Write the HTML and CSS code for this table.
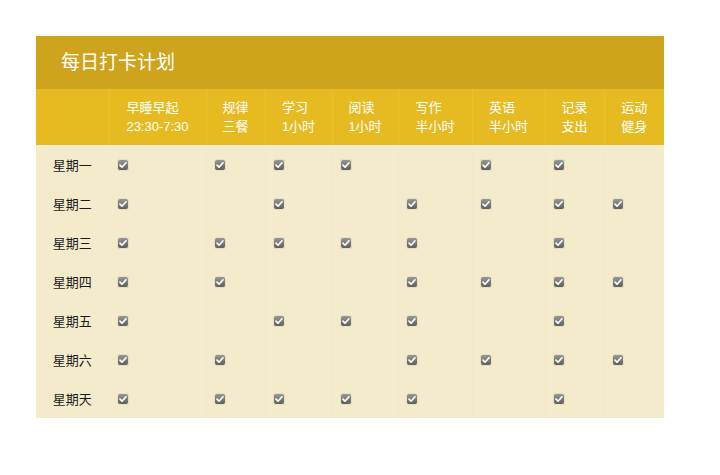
FILE: index.html
```html
<!DOCTYPE html>
<html lang="zh">
<head>
<meta charset="utf-8">
<link rel="stylesheet" href="styles.css">
</head>
<body>
<div class="plan">
  <div class="title">每日打卡计划</div>
  <table class="grid">
    <colgroup>
      <col class="c0"><col class="c1"><col class="c2"><col class="c3"><col class="c4"><col class="c5"><col class="c6"><col class="c7"><col class="c8">
    </colgroup>
    <thead>
      <tr>
        <th></th>
        <th><span class="lbl">早睡早起<br>23:30-7:30</span></th>
        <th><span class="lbl">规律<br>三餐</span></th>
        <th><span class="lbl">学习<br>1小时</span></th>
        <th><span class="lbl">阅读<br>1小时</span></th>
        <th><span class="lbl">写作<br>半小时</span></th>
        <th><span class="lbl">英语<br>半小时</span></th>
        <th><span class="lbl">记录<br>支出</span></th>
        <th><span class="lbl">运动<br>健身</span></th>
      </tr>
    </thead>
    <tbody id="rows"></tbody>
  </table>
</div>
<script>
  var data = [
    ["星期一", [1,1,1,1,0,1,1,0]],
    ["星期二", [1,0,1,0,1,1,1,1]],
    ["星期三", [1,1,1,1,1,0,1,0]],
    ["星期四", [1,1,0,0,1,1,1,1]],
    ["星期五", [1,0,1,1,1,0,1,0]],
    ["星期六", [1,1,0,0,1,1,1,1]],
    ["星期天", [1,1,1,1,1,0,1,0]]
  ];
  var box = '<svg class="chk" width="12" height="12" viewBox="0 0 12 12"><defs><linearGradient id="g" x1="0" y1="0" x2="0" y2="1"><stop offset="0" stop-color="#9a9a9a"/><stop offset="1" stop-color="#5c5c5c"/></linearGradient></defs><rect x="0.5" y="0.5" width="11" height="11" rx="2.5" fill="url(#g)" stroke="#e8e0c0" stroke-width="1"/><path d="M3 6.2 L5 8.2 L9 3.8" fill="none" stroke="#fff" stroke-width="1.7" stroke-linecap="round" stroke-linejoin="round"/></svg>';
  var tb = document.getElementById('rows');
  data.forEach(function (r) {
    var tr = document.createElement('tr');
    var h = '<th>' + r[0] + '</th>';
    r[1].forEach(function (v) { h += '<td>' + (v ? box : '') + '</td>'; });
    tr.innerHTML = h;
    tb.appendChild(tr);
  });
</script>
</body>
</html>
```
FILE: styles.css
```css
html, body {
  margin: 0;
  padding: 0;
  background: #fff;
}
body {
  padding: 36px 0 0 36px;
  font-family: "Liberation Sans", "Noto Sans CJK SC", sans-serif;
}
.plan {
  width: 628px;
}
.title {
  background: #cea41d;
  color: #fff;
  font-size: 19px;
  height: 53px;
  line-height: 53px;
  padding-left: 25px;
  box-sizing: border-box;
}
.grid {
  width: 628px;
  border-collapse: collapse;
  table-layout: fixed;
}
.c0 { width: 73px; }
.c1 { width: 97px; }
.c2 { width: 59px; }
.c3 { width: 67px; }
.c4 { width: 66px; }
.c5 { width: 74px; }
.c6 { width: 73px; }
.c7 { width: 59px; }
.c8 { width: 60px; }
.grid thead th {
  background: #e6bb22;
  color: #fff;
  font-weight: normal;
  font-size: 13px;
  line-height: 19px;
  height: 56px;
  padding: 0;
  text-align: center;
  vertical-align: middle;
  border-left: 1px solid #e9c234;
}
.grid thead th:first-child { border-left: none; }
.lbl {
  display: inline-block;
  text-align: left;
}
.grid tbody th,
.grid tbody td {
  background: #f3ebcc;
  height: 39px;
  padding: 0;
  vertical-align: middle;
  border-left: 1px solid #f1e8c6;
}
.grid tbody th {
  font-weight: normal;
  font-size: 13px;
  color: #1a1a1a;
  text-align: center;
  border-left: none;
}
.grid tbody td {
  text-align: left;
  padding-left: 7px;
}
.chk {
  display: block;
}
```
